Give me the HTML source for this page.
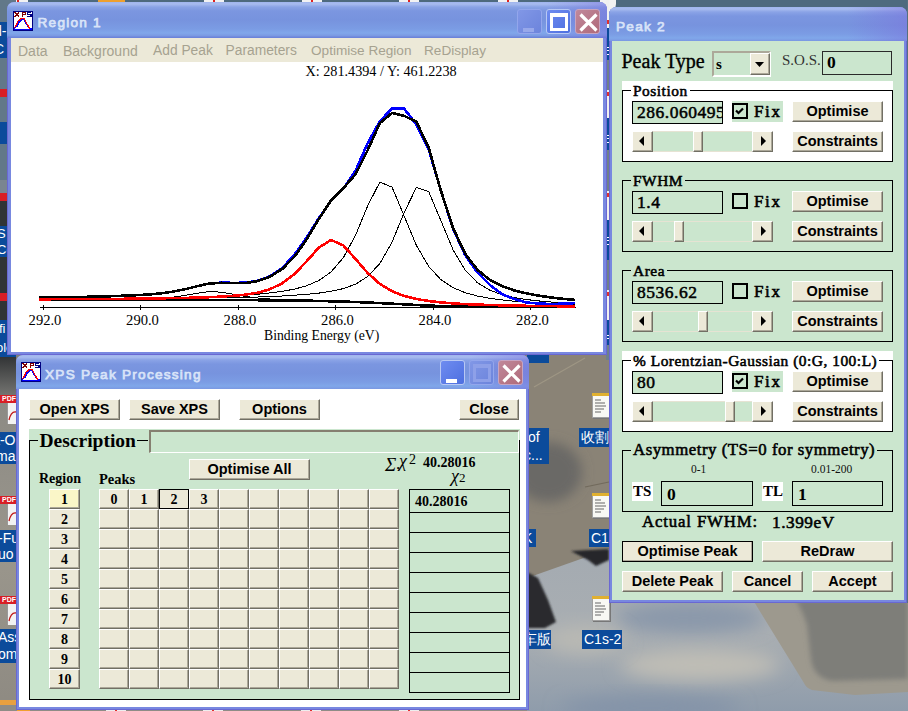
<!DOCTYPE html><html><head><meta charset="utf-8"><style>
*{margin:0;padding:0;box-sizing:border-box}
html,body{width:908px;height:711px;overflow:hidden;background:#7a8288;font-family:"Liberation Sans",sans-serif}
.a{position:absolute}
.win{position:absolute;background:#7888e0;border-radius:8px 8px 0 0;box-shadow:inset 1px 0 0 #6a68d2,inset -1px 0 0 #6a68d2,inset 0 -1px 0 #6a68d2}
.tb2{position:absolute;top:0;right:0;width:60px;border-radius:0 7px 0 0;background:linear-gradient(to right,rgba(123,110,220,0),rgba(123,110,220,0.45))}
.tb{position:absolute;left:0;top:0;right:0;border-radius:7px 7px 0 0;
 background:linear-gradient(to bottom,#9fb5ee 0px,#a8bcef 2px,#8aa3e6 5px,#7b96e0 9px,#7793de 18px,#7b9ce4 27px,#80a7ea 31px,#7a98e2 34px,#6b84da 35px);}
.tt{position:absolute;color:#d8e3f8;font-weight:normal;font-size:13.6px;letter-spacing:1.25px;-webkit-text-stroke:0.75px #d8e3f8;white-space:nowrap}
.btn{position:absolute;background:#ece9d8;text-align:center;font-weight:bold;color:#000;white-space:nowrap;
 border-top:1px solid #fff;border-left:1px solid #fff;border-right:1px solid #716f64;border-bottom:1px solid #716f64;
 box-shadow:inset -1px -1px 0 #aca899;}
.serif{font-family:"Liberation Serif",serif}
.tbx{position:absolute;background:#cbe6ce;border:1px solid #000;white-space:nowrap;overflow:hidden}
.frame{position:absolute;border:1px solid #000}
.lbl{position:absolute;white-space:nowrap;font-family:"Liberation Serif",serif;font-weight:bold;line-height:1}
.med{font-weight:normal;-webkit-text-stroke:0.55px #000;letter-spacing:0.52px}
.cap{position:absolute;width:25px;height:25px;border-radius:3px;}
</style></head><body>

<div class="a" style="left:0;top:0;width:908px;height:711px;background:#7d7f7c"></div>
<div class="a" style="left:0;top:0;width:908px;height:12px;background:#4e6a7e"></div>
<div class="a" style="left:8px;top:0;width:20px;height:6px;background:#f2f2f2"></div><div class="a" style="left:17px;top:0;width:2px;height:6px;background:#e02020"></div>
<div class="a" style="left:204px;top:0;width:20px;height:6px;background:#f2f2f2"></div><div class="a" style="left:213px;top:0;width:2px;height:6px;background:#e02020"></div>
<div class="a" style="left:302px;top:0;width:20px;height:6px;background:#f2f2f2"></div><div class="a" style="left:311px;top:0;width:2px;height:6px;background:#e02020"></div>
<div class="a" style="left:399px;top:0;width:20px;height:6px;background:#f2f2f2"></div><div class="a" style="left:408px;top:0;width:2px;height:6px;background:#e02020"></div>
<div class="a" style="left:498px;top:0;width:20px;height:6px;background:#f2f2f2"></div><div class="a" style="left:507px;top:0;width:2px;height:6px;background:#e02020"></div>
<div class="a" style="left:600px;top:0;width:16px;height:12px;background:#f2f2f2;border-radius:0 0 8px 8px"></div>
<div class="a" style="left:98px;top:0;width:27px;height:6px;background:#eea030"></div>
<div class="a" style="left:0;top:0;width:16px;height:200px;background:#627889"></div>
<div class="a" style="left:0;top:180px;width:16px;height:20px;background:#7a8590"></div><div class="a" style="left:0;top:200px;width:16px;height:160px;background:#303436"></div>
<div class="a" style="left:0;top:355px;width:16px;height:45px;background:linear-gradient(to bottom,#2f3133,#7c7c78)"></div>
<div class="a" style="left:0;top:400px;width:16px;height:311px;background:linear-gradient(to bottom,#8c8a84,#9a968c 50%,#8e8a82)"></div>
<div class="a" style="left:0px;top:22px;width:16px;height:36px;background:#0b4b9b;overflow:hidden;color:#fff;font-size:14px;line-height:18.0px;white-space:nowrap;text-align:left"><div style="position:relative;left:-6px">d-<br>C</div></div>
<div class="a" style="left:0px;top:122px;width:16px;height:22px;background:#0b4b9b;overflow:hidden;color:#fff;font-size:14px;line-height:22px;white-space:nowrap;text-align:left"><div style="position:relative;left:0px"></div></div>
<div class="a" style="left:0px;top:226px;width:16px;height:31px;background:#0b4b9b;overflow:hidden;color:#fff;font-size:13px;line-height:15.5px;white-space:nowrap;text-align:left"><div style="position:relative;left:-3px">S<br>Co</div></div>
<div class="a" style="left:0px;top:320px;width:16px;height:37px;background:#0b4b9b;overflow:hidden;color:#fff;font-size:13px;line-height:18.5px;white-space:nowrap;text-align:left"><div style="position:relative;left:-4px">ifi<br>olo</div></div>
<div class="a" style="left:0px;top:432px;width:16px;height:32px;background:#0b4b9b;overflow:hidden;color:#fff;font-size:14px;line-height:16.0px;white-space:nowrap;text-align:left"><div style="position:relative;left:-4px">t-O<br>ma</div></div>
<div class="a" style="left:0px;top:530px;width:16px;height:32px;background:#0b4b9b;overflow:hidden;color:#fff;font-size:14px;line-height:16.0px;white-space:nowrap;text-align:left"><div style="position:relative;left:-2px">-Fu<br>uo</div></div>
<div class="a" style="left:0px;top:629px;width:16px;height:34px;background:#0b4b9b;overflow:hidden;color:#fff;font-size:14px;line-height:17.0px;white-space:nowrap;text-align:left"><div style="position:relative;left:-2px">Ass<br>om</div></div>
<div class="a" style="left:0;top:89px;width:16px;height:8px;background:#d81e25"></div>
<div class="a" style="left:0;top:193px;width:16px;height:8px;background:#d81e25"></div>
<div class="a" style="left:0;top:293px;width:16px;height:8px;background:#d81e25"></div>
<div class="a" style="left:7px;top:403px;width:9px;height:21px;background:#f2f2f2;border-left:1px solid #999"></div><div class="a" style="left:0;top:395px;width:16px;height:8px;background:#d81e25;color:#fff;font-size:7px;font-weight:bold;line-height:8px;text-align:right;overflow:hidden">PDF</div><svg class="a" style="left:8px;top:407px" width="8" height="14"><path d="M1,13 Q3,4 8,5" stroke="#c01818" stroke-width="1.3" fill="none"/></svg>
<div class="a" style="left:7px;top:504px;width:9px;height:21px;background:#f2f2f2;border-left:1px solid #999"></div><div class="a" style="left:0;top:496px;width:16px;height:8px;background:#d81e25;color:#fff;font-size:7px;font-weight:bold;line-height:8px;text-align:right;overflow:hidden">PDF</div><svg class="a" style="left:8px;top:508px" width="8" height="14"><path d="M1,13 Q3,4 8,5" stroke="#c01818" stroke-width="1.3" fill="none"/></svg>
<div class="a" style="left:7px;top:604px;width:9px;height:21px;background:#f2f2f2;border-left:1px solid #999"></div><div class="a" style="left:0;top:596px;width:16px;height:8px;background:#d81e25;color:#fff;font-size:7px;font-weight:bold;line-height:8px;text-align:right;overflow:hidden">PDF</div><svg class="a" style="left:8px;top:608px" width="8" height="14"><path d="M1,13 Q3,4 8,5" stroke="#c01818" stroke-width="1.3" fill="none"/></svg>
<div class="a" style="left:0;top:700px;width:16px;height:11px;background:#e8a040"></div>
<svg class="a" style="left:527px;top:340px" width="381" height="371" viewBox="527 340 381 371"><defs><filter id="bl" x="-50%" y="-50%" width="200%" height="200%"><feGaussianBlur stdDeviation="6"/></filter><filter id="bl2"><feGaussianBlur stdDeviation="1.2"/></filter><filter id="bl3" x="-50%" y="-50%" width="200%" height="200%"><feGaussianBlur stdDeviation="9"/></filter><filter id="bl4"><feGaussianBlur stdDeviation="2.5"/></filter><linearGradient id="sky" x1="0" y1="0" x2="0" y2="1"><stop offset="0" stop-color="#a3aab1"/><stop offset="0.55" stop-color="#a9aeb2"/><stop offset="1" stop-color="#8f9cab"/></linearGradient></defs><rect x="527" y="540" width="381" height="171" fill="url(#sky)"/><ellipse cx="690" cy="618" rx="75" ry="16" fill="#8a98aa" filter="url(#bl3)"/><ellipse cx="700" cy="665" rx="80" ry="16" fill="#c0beb6" filter="url(#bl3)"/><ellipse cx="585" cy="640" rx="40" ry="14" fill="#b9b9b4" filter="url(#bl3)"/><ellipse cx="650" cy="708" rx="90" ry="12" fill="#8393a8" filter="url(#bl3)"/><polygon points="527,340 609,340 609,549 527,578" fill="#8a8376"/><ellipse cx="548" cy="472" rx="34" ry="30" fill="#6a6966" filter="url(#bl)"/><polyline points="534,387 585,358" stroke="#9e9684" stroke-width="1.2" fill="none"/><polyline points="585,487 609,482" stroke="#716a5c" stroke-width="1.2" fill="none"/><polygon points="571,551 609,549 609,560 596,566 588,560" fill="#26282a" filter="url(#bl2)"/><polygon points="527,572 538,578 548,600 556,622 545,628 527,628" fill="#2a2c2e" filter="url(#bl2)"/><path d="M753,600 L908,600 L908,692 L855,695 L812,690 Q806,688 804,683 Z" fill="#9d998e"/><path d="M796,600 L908,600 L908,679 L832,681 Q814,678 811,660 L807,625 Q802,610 796,600 Z" fill="#7e7e79" filter="url(#bl4)"/></svg>
<div class="a" style="left:527px;top:354px;width:22px;height:9px;background:#0b4b9b;overflow:hidden;color:#fff;font-size:13px;line-height:9px;white-space:nowrap;text-align:left"><div style="position:relative;left:0px"></div></div>
<div class="a" style="left:527px;top:428px;width:22px;height:36px;background:#0b4b9b;overflow:hidden;color:#fff;font-size:14px;line-height:18.0px;white-space:nowrap;text-align:left"><div style="position:relative;left:-3px">&nbsp;of<br>c...</div></div>
<div class="a" style="left:592px;top:393px;width:18px;height:25px;background:#f8f8f4;border:1px solid #a0a0a0;box-shadow:1px 1px 0 #777"></div><div class="a" style="left:592px;top:393px;width:18px;height:3px;background:#e0b030"></div><svg class="a" style="left:595px;top:399px" width="12" height="16"><path d="M0,1 H6 M0,4 H10 M0,7 H11 M0,10 H9 M0,13 H6" stroke="#666" stroke-width="1"/></svg>
<div class="a" style="left:579px;top:428px;width:30px;height:19px;background:#0b4b9b;overflow:hidden;color:#fff;font-size:14px;line-height:19px;white-space:nowrap;text-align:left"><div style="position:relative;left:2px">收割</div></div>
<div class="a" style="left:592px;top:493px;width:18px;height:25px;background:#f8f8f4;border:1px solid #a0a0a0;box-shadow:1px 1px 0 #777"></div><div class="a" style="left:592px;top:493px;width:18px;height:3px;background:#e0b030"></div><svg class="a" style="left:595px;top:499px" width="12" height="16"><path d="M0,1 H6 M0,4 H10 M0,7 H11 M0,10 H9 M0,13 H6" stroke="#666" stroke-width="1"/></svg>
<div class="a" style="left:527px;top:529px;width:9px;height:18px;background:#0b4b9b;overflow:hidden;color:#fff;font-size:14px;line-height:18px;white-space:nowrap;text-align:left"><div style="position:relative;left:-4px">K</div></div>
<div class="a" style="left:589px;top:529px;width:20px;height:18px;background:#0b4b9b;overflow:hidden;color:#fff;font-size:14px;line-height:18px;white-space:nowrap;text-align:left"><div style="position:relative;left:2px">C1s</div></div>
<div class="a" style="left:592px;top:596px;width:18px;height:25px;background:#f8f8f4;border:1px solid #a0a0a0;box-shadow:1px 1px 0 #777"></div><div class="a" style="left:592px;top:596px;width:18px;height:3px;background:#e0b030"></div><svg class="a" style="left:595px;top:602px" width="12" height="16"><path d="M0,1 H6 M0,4 H10 M0,7 H11 M0,10 H9 M0,13 H6" stroke="#666" stroke-width="1"/></svg>
<div class="a" style="left:527px;top:630px;width:24px;height:19px;background:#0b4b9b;overflow:hidden;color:#fff;font-size:14px;line-height:19px;white-space:nowrap;text-align:left"><div style="position:relative;left:-4px">车版</div></div>
<div class="a" style="left:582px;top:630px;width:40px;height:19px;background:#0b4b9b;overflow:hidden;color:#fff;font-size:14px;line-height:19px;white-space:nowrap;text-align:left"><div style="position:relative;left:2px">C1s-2</div></div>
<div class="a" style="left:606px;top:0;width:3px;height:360px;background:#6e7f8c"></div>
<div class="a" style="left:606px;top:0px;width:3px;height:28px;background:#f0f0f0"></div>
<div class="a" style="left:606px;top:28px;width:3px;height:32px;background:#0b4b9b"></div>
<div class="a" style="left:606px;top:90px;width:3px;height:28px;background:#f0f0f0"></div>
<div class="a" style="left:606px;top:118px;width:3px;height:32px;background:#0b4b9b"></div>
<div class="a" style="left:606px;top:191px;width:3px;height:29px;background:#f0f0f0"></div>
<div class="a" style="left:606px;top:220px;width:3px;height:40px;background:#0b4b9b"></div>
<div class="a" style="left:606px;top:290px;width:3px;height:30px;background:#f0f0f0"></div>
<div class="a" style="left:606px;top:320px;width:3px;height:25px;background:#0b4b9b"></div>
<div class="a" style="left:607px;top:47px;width:2px;height:1px;background:#fff"></div>
<div class="a" style="left:607px;top:50px;width:2px;height:1px;background:#fff"></div>
<div class="a" style="left:607px;top:54px;width:2px;height:1px;background:#fff"></div>
<div class="a" style="left:607px;top:135px;width:2px;height:1px;background:#fff"></div>
<div class="a" style="left:607px;top:138px;width:2px;height:1px;background:#fff"></div>
<div class="a" style="left:607px;top:142px;width:2px;height:1px;background:#fff"></div>
<div class="a" style="left:607px;top:237px;width:2px;height:1px;background:#fff"></div>
<div class="a" style="left:607px;top:240px;width:2px;height:1px;background:#fff"></div>
<div class="a" style="left:607px;top:244px;width:2px;height:1px;background:#fff"></div>
<div class="a" style="left:607px;top:335px;width:2px;height:1px;background:#fff"></div>
<div class="a" style="left:607px;top:338px;width:2px;height:1px;background:#fff"></div>
<div class="a" style="left:606px;top:20px;width:3px;height:4px;background:#e03030"></div>
<div class="a" style="left:606px;top:92px;width:3px;height:4px;background:#e03030"></div>
<div class="a" style="left:606px;top:193px;width:3px;height:4px;background:#e03030"></div>
<div class="a" style="left:606px;top:292px;width:3px;height:4px;background:#e03030"></div>
<div class="a" style="left:907px;top:0;width:1px;height:603px;background:#56707f"></div>
<div class="a" style="left:0;top:705px;width:527px;height:6px;background:#8f8c86"></div><div class="a" style="left:17px;top:709px;width:13px;height:2px;background:#f0a030"></div>
<div class="a" style="left:106px;top:709px;width:20px;height:2px;background:#eee"></div><div class="a" style="left:115px;top:709px;width:2px;height:2px;background:#e03030"></div>
<div class="a" style="left:203px;top:709px;width:20px;height:2px;background:#eee"></div><div class="a" style="left:212px;top:709px;width:2px;height:2px;background:#e03030"></div>
<div class="a" style="left:301px;top:709px;width:20px;height:2px;background:#eee"></div><div class="a" style="left:310px;top:709px;width:2px;height:2px;background:#e03030"></div>
<div class="a" style="left:399px;top:709px;width:20px;height:2px;background:#eee"></div><div class="a" style="left:408px;top:709px;width:2px;height:2px;background:#e03030"></div>
<div class="win" style="position:absolute;left:7px;top:2px;width:600px;height:353px;">
<div class="tb" style="height:36px"></div><div class="tb2" style="height:36px"></div>
</div>
<svg class="a" style="left:13px;top:11px" width="20" height="20" viewBox="0 0 20 20" shape-rendering="crispEdges">
<rect x="0" y="0" width="20" height="20" fill="#000080"/><rect x="1" y="1" width="18" height="18" fill="#fff"/>
<path d="M1.5,1.5 L6,5.5 M6,1.5 L1.5,5.5" stroke="#800000" stroke-width="1.4" fill="none"/>
<path d="M9.5,6 V1.5 H12.5 V3.5 H9.5" stroke="#800000" stroke-width="1.2" fill="none"/>
<path d="M18,1.5 H14.5 V3.5 H18 V5.5 H14" stroke="#000080" stroke-width="1.2" fill="none"/>
<path d="M1,17.5 L4,15 L6,11 L9,8 L11,8 L13,12 L15,15 L17,17.5 L19,18" stroke="#0000ff" stroke-width="1.6" fill="none"/>
<path d="M1,17 L3,15 L5,10 L8,7.5 L11,7.5 L12,9 L14,13 L16,16 L17,18.5" stroke="#ff0000" stroke-width="1.3" fill="none"/>
<rect x="1" y="18" width="18" height="1" fill="#0000ff"/>
</svg>
<div class="tt" style="left:37.5px;top:15px">Region 1</div>
<div class="cap" style="left:517px;top:9px;background:linear-gradient(135deg,#8197e6,#6c84dc);border:1px solid #93a6ec;"><div class="a" style="left:5px;top:18px;width:11px;height:4px;background:#97a8ea"></div></div><div class="cap" style="left:546px;top:9px;background:linear-gradient(135deg,#6f8cf0,#4d6fe0);border:1px solid #b8c8f4;"><div class="a" style="left:3px;top:3px;width:18px;height:18px;border:3px solid #fff;border-top-width:4px"></div></div><div class="cap" style="left:575px;top:9px;background:linear-gradient(135deg,#c0889a,#b06a7a);border:1px solid #c8a4c0;"><svg class="a" style="left:2px;top:2px" width="21" height="21"><path d="M2.5,2.5 L18.5,18.5 M18.5,2.5 L2.5,18.5" stroke="#fff" stroke-width="3.2"/></svg></div>
<div class="a" style="left:11px;top:38px;width:592px;height:24px;background:#ece9d8"></div>
<div class="a" style="left:18px;top:43px;font-size:14px;color:#a6a290;white-space:nowrap">Data</div>
<div class="a" style="left:63px;top:43px;font-size:14px;color:#a6a290;white-space:nowrap">Background</div>
<div class="a" style="left:153px;top:43px;font-size:13.8px;color:#a6a290;white-space:nowrap">Add Peak</div>
<div class="a" style="left:225.5px;top:43px;font-size:13.8px;color:#a6a290;white-space:nowrap">Parameters</div>
<div class="a" style="left:311px;top:43px;font-size:13.6px;color:#a6a290;white-space:nowrap">Optimise Region</div>
<div class="a" style="left:424px;top:43px;font-size:13.6px;color:#a6a290;white-space:nowrap">ReDisplay</div>
<div class="a" style="left:11px;top:62px;width:592px;height:290px;background:#fff"></div>
<div class="a serif" style="left:305.5px;top:63px;font-size:14.2px;white-space:nowrap">X: 281.4394 / Y: 461.2238</div>
<svg class="a" style="left:11px;top:63px" width="592" height="288" viewBox="11 63 592 288" shape-rendering="crispEdges"><line x1="40" y1="307.5" x2="576" y2="307.5" stroke="#000" stroke-width="1"/><line x1="43.0" y1="305" x2="43.0" y2="310" stroke="#000" stroke-width="1"/><line x1="140.5" y1="305" x2="140.5" y2="310" stroke="#000" stroke-width="1"/><line x1="238.0" y1="305" x2="238.0" y2="310" stroke="#000" stroke-width="1"/><line x1="335.5" y1="305" x2="335.5" y2="310" stroke="#000" stroke-width="1"/><line x1="433.0" y1="305" x2="433.0" y2="310" stroke="#000" stroke-width="1"/><line x1="530.5" y1="305" x2="530.5" y2="310" stroke="#000" stroke-width="1"/><polyline points="38.6,299.7 50.8,299.7 63.0,299.7 75.2,299.8 87.4,299.8 99.6,299.8 111.7,299.8 123.9,299.8 136.1,299.8 148.3,299.8 160.5,299.8 172.7,299.9 184.9,299.9 197.1,299.9 209.2,300.0 221.4,300.1 233.6,300.1 245.8,300.2 258.0,300.2 270.2,300.3 282.4,300.4 294.6,300.5 306.7,300.7 318.9,300.9 331.1,301.3 343.3,301.6 355.5,302.0 367.7,302.5 379.9,303.1 392.1,303.7 404.2,304.3 416.4,305.0 428.6,305.6 440.8,306.0 453.0,306.3 465.2,306.6 477.4,306.7 489.6,306.8 501.7,306.9 513.9,307.0 526.1,307.0 538.3,307.1 550.5,307.1 562.7,307.1 574.9,307.2" fill="none" stroke="#000" stroke-width="2.6"/>
<polyline points="38.6,299.6 50.8,299.6 63.0,299.6 75.2,299.5 87.4,299.5 99.6,299.5 111.7,299.4 123.9,299.3 136.1,299.1 148.3,298.8 160.5,298.2 172.7,297.2 184.9,295.4 197.1,293.2 209.2,291.6 221.4,292.2 233.6,294.3 245.8,296.5 258.0,298.0 270.2,299.0 282.4,299.5 294.6,299.9 306.7,300.2 318.9,300.6 331.1,301.0 343.3,301.4 355.5,301.8 367.7,302.3 379.9,302.9 392.1,303.6 404.2,304.2 416.4,304.9 428.6,305.5 440.8,305.9 453.0,306.3 465.2,306.5 477.4,306.7 489.6,306.8 501.7,306.9 513.9,306.9 526.1,307.0 538.3,307.0 550.5,307.1 562.7,307.1 574.9,307.1" fill="none" stroke="#000" stroke-width="1"/>
<polyline points="38.6,298.9 50.8,298.8 63.0,298.8 75.2,298.7 87.4,298.6 99.6,298.5 111.7,298.4 123.9,298.3 136.1,298.2 148.3,298.0 160.5,297.8 172.7,297.6 184.9,297.4 197.1,297.1 209.2,296.7 221.4,296.3 233.6,295.8 245.8,295.1 258.0,294.2 270.2,292.9 282.4,291.3 294.6,289.1 306.7,285.7 318.9,280.5 331.1,271.9 343.3,257.7 355.5,235.4 367.7,205.8 379.9,182.0 392.1,187.2 404.2,216.2 416.4,245.4 428.6,266.3 440.8,279.6 453.0,287.7 465.2,292.7 477.4,296.0 489.6,298.3 501.7,299.9 513.9,301.2 526.1,302.1 538.3,302.9 550.5,303.5 562.7,304.0 574.9,304.4" fill="none" stroke="#000" stroke-width="1"/>
<polyline points="38.6,299.1 50.8,299.1 63.0,299.1 75.2,299.0 87.4,299.0 99.6,298.9 111.7,298.9 123.9,298.8 136.1,298.7 148.3,298.6 160.5,298.5 172.7,298.4 184.9,298.3 197.1,298.2 209.2,298.0 221.4,297.9 233.6,297.6 245.8,297.3 258.0,297.0 270.2,296.5 282.4,296.0 294.6,295.2 306.7,294.3 318.9,293.1 331.1,291.3 343.3,288.6 355.5,284.2 367.7,276.5 379.9,263.4 392.1,242.0 404.2,212.5 416.4,187.4 428.6,191.4 440.8,220.4 453.0,249.7 465.2,270.2 477.4,282.7 489.6,290.1 501.7,294.6 513.9,297.5 526.1,299.5 538.3,300.9 550.5,302.0 562.7,302.8 574.9,303.5" fill="none" stroke="#000" stroke-width="1"/>
<polyline points="38.6,297.6 50.8,297.4 63.0,297.2 75.2,297.0 87.4,296.8 99.6,296.5 111.7,296.2 123.9,295.7 136.1,295.2 148.3,294.5 160.5,293.4 172.7,291.7 184.9,289.3 197.1,286.2 209.2,283.5 221.4,282.6 233.6,282.9 245.8,282.7 258.0,280.7 270.2,276.2 282.4,268.0 294.6,254.4 306.7,237.6 318.9,218.1 331.1,200.7 343.3,188.6 355.5,170.8 367.7,143.1 379.9,121.2 392.1,108.4 404.2,108.7 416.4,124.6 428.6,149.0 440.8,190.4 453.0,228.5 465.2,255.2 477.4,272.4 489.6,284.7 501.7,294.0 513.9,298.9 526.1,302.5 538.3,303.5 550.5,304.0 562.7,303.7 574.9,303.1" fill="none" stroke="#0000ff" stroke-width="2.6"/>
<polyline points="38.6,297.6 50.8,297.4 63.0,297.2 75.2,297.0 87.4,296.8 99.6,296.5 111.7,296.2 123.9,295.7 136.1,295.2 148.3,294.5 160.5,293.4 172.7,291.7 184.9,289.3 197.1,286.2 209.2,283.6 221.4,282.8 233.6,283.2 245.8,283.0 258.0,281.0 270.2,276.6 282.4,268.8 294.6,256.5 306.7,239.3 318.9,218.8 331.1,200.4 343.3,188.2 355.5,174.4 367.7,150.2 379.9,123.0 392.1,113.0 404.2,115.9 416.4,121.8 428.6,147.5 440.8,190.3 453.0,228.0 465.2,253.7 477.4,269.8 489.6,279.7 501.7,286.0 513.9,290.3 526.1,293.3 538.3,295.6 550.5,297.4 562.7,298.8 574.9,299.9" fill="none" stroke="#000" stroke-width="2.6"/>
<polyline points="38.6,299.2 50.8,299.2 63.0,299.1 75.2,299.1 87.4,299.0 99.6,298.9 111.7,298.9 123.9,298.8 136.1,298.6 148.3,298.5 160.5,298.3 172.7,298.1 184.9,297.9 197.1,297.6 209.2,297.2 221.4,296.6 233.6,295.8 245.8,294.6 258.0,292.6 270.2,289.1 282.4,283.2 294.6,273.9 306.7,261.2 318.9,247.5 331.1,240.0 343.3,245.4 355.5,259.0 367.7,273.0 379.9,283.9 392.1,291.3 404.2,296.0 416.4,299.0 428.6,301.0 440.8,302.4 453.0,303.4 465.2,304.1 477.4,304.6 489.6,305.0 501.7,305.3 513.9,305.6 526.1,305.8 538.3,306.0 550.5,306.1 562.7,306.3 574.9,306.4" fill="none" stroke="#ff0000" stroke-width="2.6"/></svg>
<div class="a serif" style="left:25.0px;top:311.5px;width:40px;text-align:center;font-size:14.6px">292.0</div>
<div class="a serif" style="left:122.5px;top:311.5px;width:40px;text-align:center;font-size:14.6px">290.0</div>
<div class="a serif" style="left:220.0px;top:311.5px;width:40px;text-align:center;font-size:14.6px">288.0</div>
<div class="a serif" style="left:317.5px;top:311.5px;width:40px;text-align:center;font-size:14.6px">286.0</div>
<div class="a serif" style="left:415.0px;top:311.5px;width:40px;text-align:center;font-size:14.6px">284.0</div>
<div class="a serif" style="left:512.5px;top:311.5px;width:40px;text-align:center;font-size:14.6px">282.0</div>
<div class="a serif" style="left:264px;top:328px;font-size:13.7px;white-space:nowrap">Binding Energy (eV)</div>
<div class="win" style="position:absolute;left:16px;top:355px;width:513px;height:355px;">
<div class="tb" style="height:34px"></div><div class="tb2" style="height:34px"></div>
</div>
<svg class="a" style="left:21px;top:362px" width="20" height="20" viewBox="0 0 20 20" shape-rendering="crispEdges">
<rect x="0" y="0" width="20" height="20" fill="#000080"/><rect x="1" y="1" width="18" height="18" fill="#fff"/>
<path d="M1.5,1.5 L6,5.5 M6,1.5 L1.5,5.5" stroke="#800000" stroke-width="1.4" fill="none"/>
<path d="M9.5,6 V1.5 H12.5 V3.5 H9.5" stroke="#800000" stroke-width="1.2" fill="none"/>
<path d="M18,1.5 H14.5 V3.5 H18 V5.5 H14" stroke="#000080" stroke-width="1.2" fill="none"/>
<path d="M1,17.5 L4,15 L6,11 L9,8 L11,8 L13,12 L15,15 L17,17.5 L19,18" stroke="#0000ff" stroke-width="1.6" fill="none"/>
<path d="M1,17 L3,15 L5,10 L8,7.5 L11,7.5 L12,9 L14,13 L16,16 L17,18.5" stroke="#ff0000" stroke-width="1.3" fill="none"/>
<rect x="1" y="18" width="18" height="1" fill="#0000ff"/>
</svg>
<div class="tt" style="left:45px;top:366.5px">XPS Peak Processing</div>
<div class="cap" style="left:440px;top:360px;background:linear-gradient(135deg,#6f8cf0,#4d6fe0);border:1px solid #b8c8f4;"><div class="a" style="left:5px;top:18px;width:11px;height:4px;background:#fff"></div></div><div class="cap" style="left:469px;top:360px;background:linear-gradient(135deg,#8197e6,#6c84dc);border:1px solid #93a6ec;"><div class="a" style="left:3px;top:3px;width:18px;height:18px;border:3px solid #8ea0e8;border-top-width:4px"></div></div><div class="cap" style="left:498px;top:360px;background:linear-gradient(135deg,#c0889a,#b06a7a);border:1px solid #c8a4c0;"><svg class="a" style="left:2px;top:2px" width="21" height="21"><path d="M2.5,2.5 L18.5,18.5 M18.5,2.5 L2.5,18.5" stroke="#fff" stroke-width="3.2"/></svg></div>
<div class="a" style="left:19px;top:389px;width:507px;height:318px;background:#fff"></div>
<div class="btn" style="position:absolute;left:29px;top:399px;width:91px;height:21px;font-size:14.5px;line-height:19px;">Open XPS</div>
<div class="btn" style="position:absolute;left:129px;top:399px;width:91px;height:21px;font-size:14.5px;line-height:19px;">Save XPS</div>
<div class="btn" style="position:absolute;left:239px;top:399px;width:81px;height:21px;font-size:14.5px;line-height:19px;">Options</div>
<div class="btn" style="position:absolute;left:459px;top:399px;width:60px;height:21px;font-size:14.5px;line-height:19px;">Close</div>
<div class="a" style="left:29px;top:429px;width:491px;height:271px;background:#cbe6ce"></div>
<div class="frame" style="left:29px;top:440px;width:491px;height:260px;border-top:none"></div>
<div class="a" style="left:29px;top:440px;width:9px;height:1px;background:#000"></div>
<div class="lbl" style="left:39.5px;top:431px;font-size:19.5px">Description</div>
<div class="a" style="left:137px;top:440px;width:11px;height:1px;background:#000"></div>
<div class="a" style="left:149px;top:430px;width:370px;height:23px;background:#cbe6ce;border-top:2px solid #857f70;border-left:2px solid #857f70;border-bottom:1px solid #fff;border-right:1px solid #fff"></div>
<div class="btn" style="position:absolute;left:189px;top:459px;width:121px;height:21px;font-size:14.5px;line-height:19px;">Optimise All</div>
<div class="a serif" style="left:385px;top:454.5px;font-size:19px;line-height:20px;font-style:italic">&Sigma;</div>
<div class="a serif" style="left:396px;top:454px;font-size:17px;line-height:20px">.</div>
<div class="a serif" style="left:399px;top:451px;font-size:18px;line-height:20px;font-style:italic">&chi;</div>
<div class="a serif" style="left:409px;top:452px;font-size:14px;line-height:16px">2</div>
<div class="lbl" style="left:423px;top:456px;font-size:14px">40.28016</div>
<div class="a serif" style="left:451px;top:466px;font-size:18px;line-height:20px;font-style:italic">&chi;</div>
<div class="a serif" style="left:459px;top:469.5px;font-size:13px;line-height:16px">2</div>
<div class="lbl" style="left:39px;top:472px;font-size:14px">Region</div>
<div class="lbl" style="left:99px;top:472px;font-size:14.5px">Peaks</div>
<div class="btn serif" style="position:absolute;left:49px;top:489px;width:31px;height:20px;background:#faf6c8;font-size:14px;line-height:20px">1</div>
<div class="btn serif" style="position:absolute;left:49px;top:509px;width:31px;height:20px;background:#ece9d8;font-size:14px;line-height:20px">2</div>
<div class="btn serif" style="position:absolute;left:49px;top:529px;width:31px;height:20px;background:#ece9d8;font-size:14px;line-height:20px">3</div>
<div class="btn serif" style="position:absolute;left:49px;top:549px;width:31px;height:20px;background:#ece9d8;font-size:14px;line-height:20px">4</div>
<div class="btn serif" style="position:absolute;left:49px;top:569px;width:31px;height:20px;background:#ece9d8;font-size:14px;line-height:20px">5</div>
<div class="btn serif" style="position:absolute;left:49px;top:589px;width:31px;height:20px;background:#ece9d8;font-size:14px;line-height:20px">6</div>
<div class="btn serif" style="position:absolute;left:49px;top:609px;width:31px;height:20px;background:#ece9d8;font-size:14px;line-height:20px">7</div>
<div class="btn serif" style="position:absolute;left:49px;top:629px;width:31px;height:20px;background:#ece9d8;font-size:14px;line-height:20px">8</div>
<div class="btn serif" style="position:absolute;left:49px;top:649px;width:31px;height:20px;background:#ece9d8;font-size:14px;line-height:20px">9</div>
<div class="btn serif" style="position:absolute;left:49px;top:669px;width:31px;height:20px;background:#ece9d8;font-size:14px;line-height:20px">10</div>
<div class="btn serif" style="position:absolute;left:99px;top:489px;width:30px;height:20px;font-size:14px;line-height:20px;">0</div>
<div class="btn serif" style="position:absolute;left:129px;top:489px;width:30px;height:20px;font-size:14px;line-height:20px;">1</div>
<div class="btn serif" style="position:absolute;left:159px;top:489px;width:30px;height:20px;font-size:14px;line-height:20px;border:1px solid #000;box-shadow:none;">2</div>
<div class="btn serif" style="position:absolute;left:189px;top:489px;width:30px;height:20px;font-size:14px;line-height:20px;">3</div>
<div class="btn serif" style="position:absolute;left:219px;top:489px;width:30px;height:20px;font-size:14px;line-height:20px;"></div>
<div class="btn serif" style="position:absolute;left:249px;top:489px;width:30px;height:20px;font-size:14px;line-height:20px;"></div>
<div class="btn serif" style="position:absolute;left:279px;top:489px;width:30px;height:20px;font-size:14px;line-height:20px;"></div>
<div class="btn serif" style="position:absolute;left:309px;top:489px;width:30px;height:20px;font-size:14px;line-height:20px;"></div>
<div class="btn serif" style="position:absolute;left:339px;top:489px;width:30px;height:20px;font-size:14px;line-height:20px;"></div>
<div class="btn serif" style="position:absolute;left:369px;top:489px;width:30px;height:20px;font-size:14px;line-height:20px;"></div>
<div class="btn serif" style="position:absolute;left:99px;top:509px;width:30px;height:20px;font-size:14px;line-height:20px;"></div>
<div class="btn serif" style="position:absolute;left:129px;top:509px;width:30px;height:20px;font-size:14px;line-height:20px;"></div>
<div class="btn serif" style="position:absolute;left:159px;top:509px;width:30px;height:20px;font-size:14px;line-height:20px;"></div>
<div class="btn serif" style="position:absolute;left:189px;top:509px;width:30px;height:20px;font-size:14px;line-height:20px;"></div>
<div class="btn serif" style="position:absolute;left:219px;top:509px;width:30px;height:20px;font-size:14px;line-height:20px;"></div>
<div class="btn serif" style="position:absolute;left:249px;top:509px;width:30px;height:20px;font-size:14px;line-height:20px;"></div>
<div class="btn serif" style="position:absolute;left:279px;top:509px;width:30px;height:20px;font-size:14px;line-height:20px;"></div>
<div class="btn serif" style="position:absolute;left:309px;top:509px;width:30px;height:20px;font-size:14px;line-height:20px;"></div>
<div class="btn serif" style="position:absolute;left:339px;top:509px;width:30px;height:20px;font-size:14px;line-height:20px;"></div>
<div class="btn serif" style="position:absolute;left:369px;top:509px;width:30px;height:20px;font-size:14px;line-height:20px;"></div>
<div class="btn serif" style="position:absolute;left:99px;top:529px;width:30px;height:20px;font-size:14px;line-height:20px;"></div>
<div class="btn serif" style="position:absolute;left:129px;top:529px;width:30px;height:20px;font-size:14px;line-height:20px;"></div>
<div class="btn serif" style="position:absolute;left:159px;top:529px;width:30px;height:20px;font-size:14px;line-height:20px;"></div>
<div class="btn serif" style="position:absolute;left:189px;top:529px;width:30px;height:20px;font-size:14px;line-height:20px;"></div>
<div class="btn serif" style="position:absolute;left:219px;top:529px;width:30px;height:20px;font-size:14px;line-height:20px;"></div>
<div class="btn serif" style="position:absolute;left:249px;top:529px;width:30px;height:20px;font-size:14px;line-height:20px;"></div>
<div class="btn serif" style="position:absolute;left:279px;top:529px;width:30px;height:20px;font-size:14px;line-height:20px;"></div>
<div class="btn serif" style="position:absolute;left:309px;top:529px;width:30px;height:20px;font-size:14px;line-height:20px;"></div>
<div class="btn serif" style="position:absolute;left:339px;top:529px;width:30px;height:20px;font-size:14px;line-height:20px;"></div>
<div class="btn serif" style="position:absolute;left:369px;top:529px;width:30px;height:20px;font-size:14px;line-height:20px;"></div>
<div class="btn serif" style="position:absolute;left:99px;top:549px;width:30px;height:20px;font-size:14px;line-height:20px;"></div>
<div class="btn serif" style="position:absolute;left:129px;top:549px;width:30px;height:20px;font-size:14px;line-height:20px;"></div>
<div class="btn serif" style="position:absolute;left:159px;top:549px;width:30px;height:20px;font-size:14px;line-height:20px;"></div>
<div class="btn serif" style="position:absolute;left:189px;top:549px;width:30px;height:20px;font-size:14px;line-height:20px;"></div>
<div class="btn serif" style="position:absolute;left:219px;top:549px;width:30px;height:20px;font-size:14px;line-height:20px;"></div>
<div class="btn serif" style="position:absolute;left:249px;top:549px;width:30px;height:20px;font-size:14px;line-height:20px;"></div>
<div class="btn serif" style="position:absolute;left:279px;top:549px;width:30px;height:20px;font-size:14px;line-height:20px;"></div>
<div class="btn serif" style="position:absolute;left:309px;top:549px;width:30px;height:20px;font-size:14px;line-height:20px;"></div>
<div class="btn serif" style="position:absolute;left:339px;top:549px;width:30px;height:20px;font-size:14px;line-height:20px;"></div>
<div class="btn serif" style="position:absolute;left:369px;top:549px;width:30px;height:20px;font-size:14px;line-height:20px;"></div>
<div class="btn serif" style="position:absolute;left:99px;top:569px;width:30px;height:20px;font-size:14px;line-height:20px;"></div>
<div class="btn serif" style="position:absolute;left:129px;top:569px;width:30px;height:20px;font-size:14px;line-height:20px;"></div>
<div class="btn serif" style="position:absolute;left:159px;top:569px;width:30px;height:20px;font-size:14px;line-height:20px;"></div>
<div class="btn serif" style="position:absolute;left:189px;top:569px;width:30px;height:20px;font-size:14px;line-height:20px;"></div>
<div class="btn serif" style="position:absolute;left:219px;top:569px;width:30px;height:20px;font-size:14px;line-height:20px;"></div>
<div class="btn serif" style="position:absolute;left:249px;top:569px;width:30px;height:20px;font-size:14px;line-height:20px;"></div>
<div class="btn serif" style="position:absolute;left:279px;top:569px;width:30px;height:20px;font-size:14px;line-height:20px;"></div>
<div class="btn serif" style="position:absolute;left:309px;top:569px;width:30px;height:20px;font-size:14px;line-height:20px;"></div>
<div class="btn serif" style="position:absolute;left:339px;top:569px;width:30px;height:20px;font-size:14px;line-height:20px;"></div>
<div class="btn serif" style="position:absolute;left:369px;top:569px;width:30px;height:20px;font-size:14px;line-height:20px;"></div>
<div class="btn serif" style="position:absolute;left:99px;top:589px;width:30px;height:20px;font-size:14px;line-height:20px;"></div>
<div class="btn serif" style="position:absolute;left:129px;top:589px;width:30px;height:20px;font-size:14px;line-height:20px;"></div>
<div class="btn serif" style="position:absolute;left:159px;top:589px;width:30px;height:20px;font-size:14px;line-height:20px;"></div>
<div class="btn serif" style="position:absolute;left:189px;top:589px;width:30px;height:20px;font-size:14px;line-height:20px;"></div>
<div class="btn serif" style="position:absolute;left:219px;top:589px;width:30px;height:20px;font-size:14px;line-height:20px;"></div>
<div class="btn serif" style="position:absolute;left:249px;top:589px;width:30px;height:20px;font-size:14px;line-height:20px;"></div>
<div class="btn serif" style="position:absolute;left:279px;top:589px;width:30px;height:20px;font-size:14px;line-height:20px;"></div>
<div class="btn serif" style="position:absolute;left:309px;top:589px;width:30px;height:20px;font-size:14px;line-height:20px;"></div>
<div class="btn serif" style="position:absolute;left:339px;top:589px;width:30px;height:20px;font-size:14px;line-height:20px;"></div>
<div class="btn serif" style="position:absolute;left:369px;top:589px;width:30px;height:20px;font-size:14px;line-height:20px;"></div>
<div class="btn serif" style="position:absolute;left:99px;top:609px;width:30px;height:20px;font-size:14px;line-height:20px;"></div>
<div class="btn serif" style="position:absolute;left:129px;top:609px;width:30px;height:20px;font-size:14px;line-height:20px;"></div>
<div class="btn serif" style="position:absolute;left:159px;top:609px;width:30px;height:20px;font-size:14px;line-height:20px;"></div>
<div class="btn serif" style="position:absolute;left:189px;top:609px;width:30px;height:20px;font-size:14px;line-height:20px;"></div>
<div class="btn serif" style="position:absolute;left:219px;top:609px;width:30px;height:20px;font-size:14px;line-height:20px;"></div>
<div class="btn serif" style="position:absolute;left:249px;top:609px;width:30px;height:20px;font-size:14px;line-height:20px;"></div>
<div class="btn serif" style="position:absolute;left:279px;top:609px;width:30px;height:20px;font-size:14px;line-height:20px;"></div>
<div class="btn serif" style="position:absolute;left:309px;top:609px;width:30px;height:20px;font-size:14px;line-height:20px;"></div>
<div class="btn serif" style="position:absolute;left:339px;top:609px;width:30px;height:20px;font-size:14px;line-height:20px;"></div>
<div class="btn serif" style="position:absolute;left:369px;top:609px;width:30px;height:20px;font-size:14px;line-height:20px;"></div>
<div class="btn serif" style="position:absolute;left:99px;top:629px;width:30px;height:20px;font-size:14px;line-height:20px;"></div>
<div class="btn serif" style="position:absolute;left:129px;top:629px;width:30px;height:20px;font-size:14px;line-height:20px;"></div>
<div class="btn serif" style="position:absolute;left:159px;top:629px;width:30px;height:20px;font-size:14px;line-height:20px;"></div>
<div class="btn serif" style="position:absolute;left:189px;top:629px;width:30px;height:20px;font-size:14px;line-height:20px;"></div>
<div class="btn serif" style="position:absolute;left:219px;top:629px;width:30px;height:20px;font-size:14px;line-height:20px;"></div>
<div class="btn serif" style="position:absolute;left:249px;top:629px;width:30px;height:20px;font-size:14px;line-height:20px;"></div>
<div class="btn serif" style="position:absolute;left:279px;top:629px;width:30px;height:20px;font-size:14px;line-height:20px;"></div>
<div class="btn serif" style="position:absolute;left:309px;top:629px;width:30px;height:20px;font-size:14px;line-height:20px;"></div>
<div class="btn serif" style="position:absolute;left:339px;top:629px;width:30px;height:20px;font-size:14px;line-height:20px;"></div>
<div class="btn serif" style="position:absolute;left:369px;top:629px;width:30px;height:20px;font-size:14px;line-height:20px;"></div>
<div class="btn serif" style="position:absolute;left:99px;top:649px;width:30px;height:20px;font-size:14px;line-height:20px;"></div>
<div class="btn serif" style="position:absolute;left:129px;top:649px;width:30px;height:20px;font-size:14px;line-height:20px;"></div>
<div class="btn serif" style="position:absolute;left:159px;top:649px;width:30px;height:20px;font-size:14px;line-height:20px;"></div>
<div class="btn serif" style="position:absolute;left:189px;top:649px;width:30px;height:20px;font-size:14px;line-height:20px;"></div>
<div class="btn serif" style="position:absolute;left:219px;top:649px;width:30px;height:20px;font-size:14px;line-height:20px;"></div>
<div class="btn serif" style="position:absolute;left:249px;top:649px;width:30px;height:20px;font-size:14px;line-height:20px;"></div>
<div class="btn serif" style="position:absolute;left:279px;top:649px;width:30px;height:20px;font-size:14px;line-height:20px;"></div>
<div class="btn serif" style="position:absolute;left:309px;top:649px;width:30px;height:20px;font-size:14px;line-height:20px;"></div>
<div class="btn serif" style="position:absolute;left:339px;top:649px;width:30px;height:20px;font-size:14px;line-height:20px;"></div>
<div class="btn serif" style="position:absolute;left:369px;top:649px;width:30px;height:20px;font-size:14px;line-height:20px;"></div>
<div class="btn serif" style="position:absolute;left:99px;top:669px;width:30px;height:20px;font-size:14px;line-height:20px;"></div>
<div class="btn serif" style="position:absolute;left:129px;top:669px;width:30px;height:20px;font-size:14px;line-height:20px;"></div>
<div class="btn serif" style="position:absolute;left:159px;top:669px;width:30px;height:20px;font-size:14px;line-height:20px;"></div>
<div class="btn serif" style="position:absolute;left:189px;top:669px;width:30px;height:20px;font-size:14px;line-height:20px;"></div>
<div class="btn serif" style="position:absolute;left:219px;top:669px;width:30px;height:20px;font-size:14px;line-height:20px;"></div>
<div class="btn serif" style="position:absolute;left:249px;top:669px;width:30px;height:20px;font-size:14px;line-height:20px;"></div>
<div class="btn serif" style="position:absolute;left:279px;top:669px;width:30px;height:20px;font-size:14px;line-height:20px;"></div>
<div class="btn serif" style="position:absolute;left:309px;top:669px;width:30px;height:20px;font-size:14px;line-height:20px;"></div>
<div class="btn serif" style="position:absolute;left:339px;top:669px;width:30px;height:20px;font-size:14px;line-height:20px;"></div>
<div class="btn serif" style="position:absolute;left:369px;top:669px;width:30px;height:20px;font-size:14px;line-height:20px;"></div>
<div class="a" style="left:409px;top:489px;width:101px;height:204px;border:1px solid #000"></div>
<div class="a" style="left:409px;top:512px;width:101px;height:1px;background:#000"></div>
<div class="a" style="left:409px;top:532px;width:101px;height:1px;background:#000"></div>
<div class="a" style="left:409px;top:552px;width:101px;height:1px;background:#000"></div>
<div class="a" style="left:409px;top:572px;width:101px;height:1px;background:#000"></div>
<div class="a" style="left:409px;top:592px;width:101px;height:1px;background:#000"></div>
<div class="a" style="left:409px;top:612px;width:101px;height:1px;background:#000"></div>
<div class="a" style="left:409px;top:632px;width:101px;height:1px;background:#000"></div>
<div class="a" style="left:409px;top:652px;width:101px;height:1px;background:#000"></div>
<div class="a" style="left:409px;top:672px;width:101px;height:1px;background:#000"></div>
<div class="lbl" style="left:415px;top:494.5px;font-size:14px">40.28016</div>
<div class="win" style="position:absolute;left:609px;top:7px;width:298px;height:596px;">
<div class="tb" style="height:34px"></div><div class="tb2" style="height:34px"></div>
</div>
<div class="tt" style="left:616px;top:18.5px">Peak 2</div>
<div class="a" style="left:612px;top:41px;width:292px;height:559px;background:#cbe6ce"></div>
<div class="a serif" style="left:621.5px;top:50px;font-size:20px;white-space:nowrap;-webkit-text-stroke:0.35px #000">Peak Type</div>
<div class="a" style="left:712px;top:51px;width:59px;height:26px;background:#cbe6ce;border-top:2px solid #aca899;border-left:2px solid #aca899;border-bottom:2px solid #fff;border-right:2px solid #fff"></div>
<div class="lbl" style="left:716px;top:57px;font-size:15px">s</div>
<div class="btn" style="position:absolute;left:750px;top:53px;width:20px;height:22px;font-size:14.5px;line-height:20px;"></div>
<svg class="a" style="left:755px;top:62px" width="10" height="6"><path d="M0,0 H9 L4.5,5 Z" fill="#000"/></svg>
<div class="a serif" style="left:782px;top:52px;font-size:15px;color:#333;white-space:nowrap">S.O.S.</div>
<div class="tbx" style="left:822px;top:51px;width:70px;height:24px;border-color:#2a2a2a"></div>
<div class="lbl" style="left:827px;top:54px;font-size:17.5px">0</div>
<div class="a" style="left:622px;top:81px;width:271px;height:81px;background:#fff"></div><div class="frame" style="left:622px;top:90px;width:271px;height:72px;"></div><div class="a" style="left:631px;top:82px;height:16px;padding:0 2px;background:#fff"><div class="lbl med" style="position:relative;font-size:15.4px;top:1px">Position</div></div><div class="tbx" style="left:632px;top:101px;width:91px;height:23px"></div><div class="a serif" style="left:637px;top:103px;font-size:17.5px;font-weight:normal;-webkit-text-stroke:0.5px #000;line-height:18px;white-space:nowrap;width:85px;overflow:hidden;letter-spacing:0.5px">286.060495</div><div class="a" style="left:732px;top:101px;width:51px;height:21px;background:#cbe6ce"></div><div class="a" style="left:732px;top:103px;width:16px;height:16px;border:2px solid #000;background:#cbe6ce"></div><svg class="a" style="left:734px;top:105px" width="12" height="12"><path d="M2,5.5 L4.5,8 L9,3.5" stroke="#000" stroke-width="2.2" fill="none"/></svg><div class="lbl med" style="left:754px;top:102.5px;font-size:17px;letter-spacing:1.6px">Fix</div><div class="btn" style="position:absolute;left:792px;top:101px;width:91px;height:21px;font-size:14.5px;line-height:19px;">Optimise</div><div class="a" style="left:632px;top:131px;width:141px;height:21px;background:#cbe6ce;border-top:1px solid #e6e3d3;border-bottom:1px solid #e6e3d3"></div><div class="btn" style="position:absolute;left:632px;top:131px;width:21px;height:21px;font-size:14.5px;line-height:19px;"></div><svg class="a" style="left:639px;top:136px" width="6" height="11"><path d="M5,0 V10 L0,5 Z" fill="#000"/></svg><div class="btn" style="position:absolute;left:752px;top:131px;width:21px;height:21px;font-size:14.5px;line-height:19px;"></div><svg class="a" style="left:761px;top:136px" width="6" height="11"><path d="M0,0 V10 L5,5 Z" fill="#000"/></svg><div class="btn" style="position:absolute;left:693px;top:131px;width:10px;height:21px;font-size:14.5px;line-height:19px;"></div><div class="btn" style="position:absolute;left:792px;top:131px;width:91px;height:21px;font-size:14.5px;line-height:19px;">Constraints</div>
<div class="frame" style="left:622px;top:180px;width:271px;height:72px;"></div><div class="a" style="left:631px;top:172px;height:16px;padding:0 2px;background:#cbe6ce"><div class="lbl med" style="position:relative;font-size:15.4px;top:1px">FWHM</div></div><div class="tbx" style="left:632px;top:191px;width:91px;height:23px"></div><div class="a serif" style="left:637px;top:193px;font-size:17.5px;font-weight:normal;-webkit-text-stroke:0.5px #000;line-height:18px;white-space:nowrap;width:85px;overflow:hidden;letter-spacing:0.5px">1.4</div><div class="a" style="left:732px;top:191px;width:51px;height:21px;background:#cbe6ce"></div><div class="a" style="left:732px;top:193px;width:16px;height:16px;border:2px solid #000;background:#cbe6ce"></div><div class="lbl med" style="left:754px;top:192.5px;font-size:17px;letter-spacing:1.6px">Fix</div><div class="btn" style="position:absolute;left:792px;top:191px;width:91px;height:21px;font-size:14.5px;line-height:19px;">Optimise</div><div class="a" style="left:632px;top:221px;width:141px;height:21px;background:#cbe6ce;border-top:1px solid #e6e3d3;border-bottom:1px solid #e6e3d3"></div><div class="btn" style="position:absolute;left:632px;top:221px;width:21px;height:21px;font-size:14.5px;line-height:19px;"></div><svg class="a" style="left:639px;top:226px" width="6" height="11"><path d="M5,0 V10 L0,5 Z" fill="#000"/></svg><div class="btn" style="position:absolute;left:752px;top:221px;width:21px;height:21px;font-size:14.5px;line-height:19px;"></div><svg class="a" style="left:761px;top:226px" width="6" height="11"><path d="M0,0 V10 L5,5 Z" fill="#000"/></svg><div class="btn" style="position:absolute;left:674px;top:221px;width:10px;height:21px;font-size:14.5px;line-height:19px;"></div><div class="btn" style="position:absolute;left:792px;top:221px;width:91px;height:21px;font-size:14.5px;line-height:19px;">Constraints</div>
<div class="frame" style="left:622px;top:270px;width:271px;height:72px;"></div><div class="a" style="left:631px;top:262px;height:16px;padding:0 2px;background:#cbe6ce"><div class="lbl med" style="position:relative;font-size:15.4px;top:1px">Area</div></div><div class="tbx" style="left:632px;top:281px;width:91px;height:23px"></div><div class="a serif" style="left:637px;top:283px;font-size:17.5px;font-weight:normal;-webkit-text-stroke:0.5px #000;line-height:18px;white-space:nowrap;width:85px;overflow:hidden;letter-spacing:0.5px">8536.62</div><div class="a" style="left:732px;top:281px;width:51px;height:21px;background:#cbe6ce"></div><div class="a" style="left:732px;top:283px;width:16px;height:16px;border:2px solid #000;background:#cbe6ce"></div><div class="lbl med" style="left:754px;top:282.5px;font-size:17px;letter-spacing:1.6px">Fix</div><div class="btn" style="position:absolute;left:792px;top:281px;width:91px;height:21px;font-size:14.5px;line-height:19px;">Optimise</div><div class="a" style="left:632px;top:311px;width:141px;height:21px;background:#cbe6ce;border-top:1px solid #e6e3d3;border-bottom:1px solid #e6e3d3"></div><div class="btn" style="position:absolute;left:632px;top:311px;width:21px;height:21px;font-size:14.5px;line-height:19px;"></div><svg class="a" style="left:639px;top:316px" width="6" height="11"><path d="M5,0 V10 L0,5 Z" fill="#000"/></svg><div class="btn" style="position:absolute;left:752px;top:311px;width:21px;height:21px;font-size:14.5px;line-height:19px;"></div><svg class="a" style="left:761px;top:316px" width="6" height="11"><path d="M0,0 V10 L5,5 Z" fill="#000"/></svg><div class="btn" style="position:absolute;left:698px;top:311px;width:10px;height:21px;font-size:14.5px;line-height:19px;"></div><div class="btn" style="position:absolute;left:792px;top:311px;width:91px;height:21px;font-size:14.5px;line-height:19px;">Constraints</div>
<div class="a" style="left:622px;top:351px;width:271px;height:81px;background:#fff"></div><div class="frame" style="left:622px;top:360px;width:271px;height:72px;"></div><div class="a" style="left:631px;top:352px;height:16px;padding:0 2px;background:#fff"><div class="lbl med" style="position:relative;font-size:15.4px;top:1px">% Lorentzian-Gaussian (0:G, 100:L)</div></div><div class="tbx" style="left:632px;top:371px;width:91px;height:23px"></div><div class="a serif" style="left:637px;top:373px;font-size:17.5px;font-weight:normal;-webkit-text-stroke:0.5px #000;line-height:18px;white-space:nowrap;width:85px;overflow:hidden;letter-spacing:0.5px">80</div><div class="a" style="left:732px;top:371px;width:51px;height:21px;background:#cbe6ce"></div><div class="a" style="left:732px;top:373px;width:16px;height:16px;border:2px solid #000;background:#cbe6ce"></div><svg class="a" style="left:734px;top:375px" width="12" height="12"><path d="M2,5.5 L4.5,8 L9,3.5" stroke="#000" stroke-width="2.2" fill="none"/></svg><div class="lbl med" style="left:754px;top:372.5px;font-size:17px;letter-spacing:1.6px">Fix</div><div class="btn" style="position:absolute;left:792px;top:371px;width:91px;height:21px;font-size:14.5px;line-height:19px;">Optimise</div><div class="a" style="left:632px;top:401px;width:141px;height:21px;background:#cbe6ce;border-top:1px solid #e6e3d3;border-bottom:1px solid #e6e3d3"></div><div class="btn" style="position:absolute;left:632px;top:401px;width:21px;height:21px;font-size:14.5px;line-height:19px;"></div><svg class="a" style="left:639px;top:406px" width="6" height="11"><path d="M5,0 V10 L0,5 Z" fill="#000"/></svg><div class="btn" style="position:absolute;left:752px;top:401px;width:21px;height:21px;font-size:14.5px;line-height:19px;"></div><svg class="a" style="left:761px;top:406px" width="6" height="11"><path d="M0,0 V10 L5,5 Z" fill="#000"/></svg><div class="btn" style="position:absolute;left:725px;top:401px;width:10px;height:21px;font-size:14.5px;line-height:19px;"></div><div class="btn" style="position:absolute;left:792px;top:401px;width:91px;height:21px;font-size:14.5px;line-height:19px;">Constraints</div>
<div class="frame" style="left:622px;top:450px;width:271px;height:62px"></div>
<div class="a" style="left:631px;top:441px;height:18px;padding:0 2px;background:#cbe6ce"><div class="lbl med" style="position:relative;font-size:16.8px;top:1px">Asymmetry (TS=0 for symmetry)</div></div>
<div class="a serif" style="left:691px;top:463px;font-size:11.5px;color:#111">0-1</div>
<div class="a serif" style="left:811px;top:463px;font-size:11.5px;color:#111">0.01-200</div>
<div class="a" style="left:632px;top:482px;width:21px;height:19px;background:#fff"></div>
<div class="lbl" style="left:633px;top:484px;font-size:15px">TS</div>
<div class="tbx" style="left:661px;top:481px;width:92px;height:25px"></div>
<div class="a serif" style="left:667px;top:484px;font-size:17.5px;font-weight:bold">0</div>
<div class="a" style="left:762px;top:482px;width:21px;height:19px;background:#fff"></div>
<div class="lbl" style="left:763px;top:484px;font-size:15px">TL</div>
<div class="tbx" style="left:792px;top:481px;width:91px;height:25px"></div>
<div class="a serif" style="left:798px;top:484px;font-size:17.5px;font-weight:bold">1</div>
<div class="lbl med" style="left:642px;top:514px;font-size:16.8px;letter-spacing:0.85px">Actual FWHM:</div>
<div class="lbl med" style="left:772px;top:514px;font-size:17.3px">1.399eV</div>
<div class="btn"  style="position:absolute;left:622px;top:541px;width:131px;height:21px;font-size:14.5px;line-height:19px;">Optimise Peak</div>
<div class="a" style="left:622px;top:541px;width:131px;height:21px;border:1px solid #000"></div>
<div class="btn" style="position:absolute;left:762px;top:541px;width:131px;height:21px;font-size:14.5px;line-height:19px;">ReDraw</div>
<div class="btn" style="position:absolute;left:622px;top:571px;width:101px;height:21px;font-size:14.5px;line-height:19px;">Delete Peak</div>
<div class="btn" style="position:absolute;left:732px;top:571px;width:71px;height:21px;font-size:14.5px;line-height:19px;">Cancel</div>
<div class="btn" style="position:absolute;left:812px;top:571px;width:81px;height:21px;font-size:14.5px;line-height:19px;">Accept</div>
</body></html>
